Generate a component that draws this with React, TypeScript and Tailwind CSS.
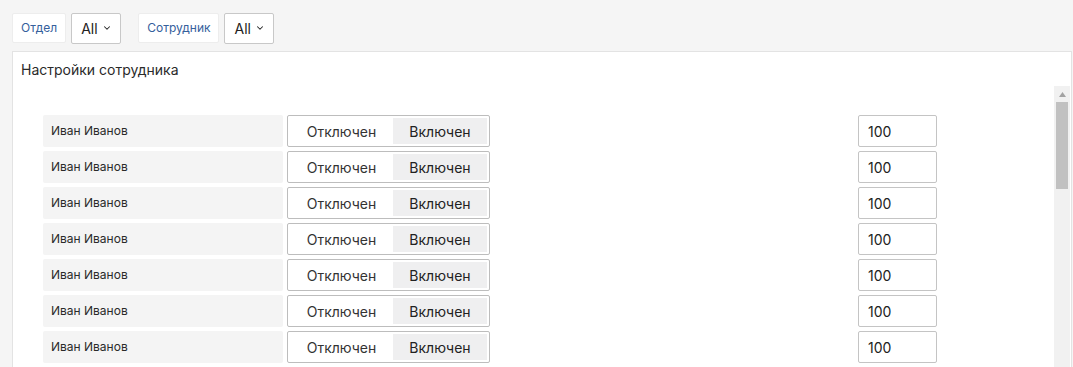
import { ChevronDown } from 'lucide-react';

const rows = Array.from({ length: 7 }, () => ({ name: 'Иван Иванов', value: '100' }));

function FilterLabel({ text }: { text: string }) {
  return (
    <div className="h-[30px] px-[8px] flex items-center bg-white border border-[#ededed] rounded-[2px] text-[12px] text-[#35609c]">
      {text}
    </div>
  );
}

function FilterSelect() {
  return (
    <div className="h-[31px] w-[50px] pl-[9px] flex items-center gap-[4px] bg-white border border-[#c8c8c8] rounded-[2px] text-[14px] text-[#222]">
      <span>All</span>
      <ChevronDown className="w-[10px] h-[10px]" strokeWidth={2.5} />
    </div>
  );
}

export default function App() {
  return (
    <div
      className="h-[367px] w-[1073px] overflow-hidden bg-[#f5f5f5] text-[#222]"
      style={{ fontFamily: 'Inter, "Noto Sans", sans-serif' }}
    >
      <div className="flex items-center pl-3 pt-[12px] h-[44px]">
        <FilterLabel text="Отдел" />
        <div className="ml-[5px]">
          <FilterSelect />
        </div>
        <div className="ml-[17px]">
          <FilterLabel text="Сотрудник" />
        </div>
        <div className="ml-[5px]">
          <FilterSelect />
        </div>
      </div>

      <div className="ml-3 mr-[1px] mt-[7px] bg-white border border-[#e3e3e3] flex flex-col h-[340px]">
        <div className="h-[34px] pl-[8px] pt-[7px] text-[14px] text-[#2a2a2a]">Настройки сотрудника</div>
        <div className="flex flex-1 min-h-0">
          <div className="flex-1 pt-[29px] pl-[30px] flex flex-col gap-[4px]">
            {rows.map((r, i) => (
              <div key={i} className="flex items-center h-[32px]">
                <div className="w-[240px] h-[32px] pl-[8px] flex items-center bg-[#f4f4f4] rounded-[2px] text-[12px] text-[#2a2a2a]">
                  {r.name}
                </div>
                <div className="ml-[4px] w-[203px] h-[32px] p-[2px] flex border border-[#bdbdbd] rounded-[2px] text-[14px]">
                  <div className="w-[103px] flex items-center justify-center text-[#333]">Отключен</div>
                  <div className="flex-1 flex items-center justify-center bg-[#efeff0] text-[#222]">Включен</div>
                </div>
                <div className="ml-[368px] w-[79px] h-[32px] pl-[9px] flex items-center border border-[#c4c4c4] rounded-[2px] text-[14px] text-[#222]">
                  {r.value}
                </div>
              </div>
            ))}
          </div>
          <div className="w-[16px] bg-[#f1f1f1] flex flex-col items-center pt-[4px] mr-[1px]">
            <svg width="7" height="5" viewBox="0 0 7 5" className="mt-[2px]">
              <path d="M3.5 0 L7 5 L0 5 Z" fill="#a3a3a3" />
            </svg>
            <div className="mt-[5px] w-[12px] h-[87px] bg-[#c1c1c1]" />
          </div>
        </div>
      </div>
    </div>
  );
}
